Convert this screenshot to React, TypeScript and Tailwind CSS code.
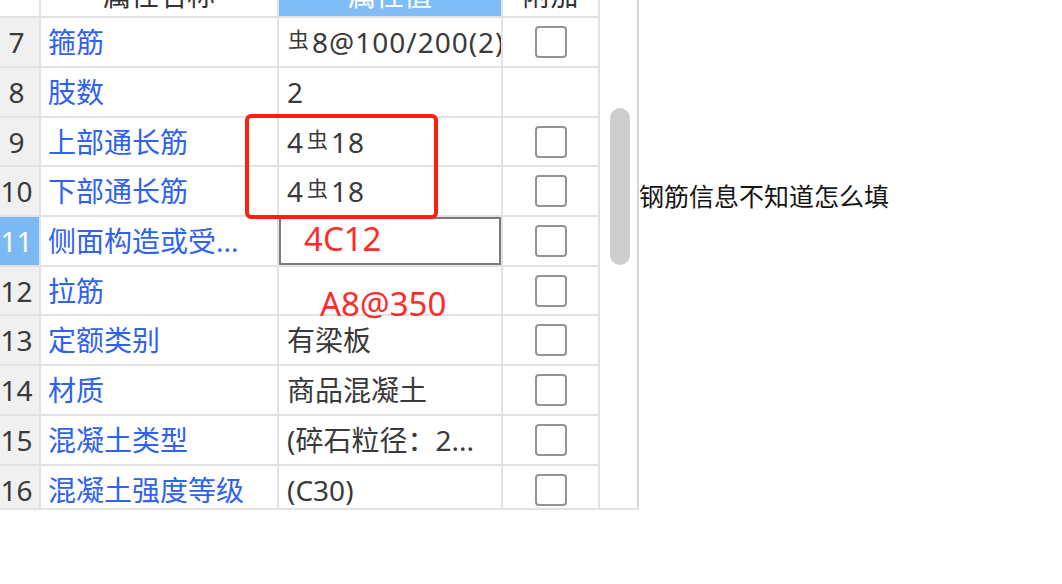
import type { ReactNode } from "react";

// rebar grade symbol, shown small and raised like in the source grid
function Rebar() {
  return <span className="text-[21px] align-[6px] mx-[3px] tracking-normal">虫</span>;
}

type Row = {
  n: number;
  name: string;
  value: ReactNode;
  check: boolean;
  h: string;
  selected?: boolean;
};

const rows: Row[] = [
  { n: 7, name: "箍筋", value: <span className="tracking-[1px] -ml-[2px]"><Rebar />8@100/200(2)</span>, check: true, h: "h-[50px]" },
  { n: 8, name: "肢数", value: "2", check: false, h: "h-[50px]" },
  { n: 9, name: "上部通长筋", value: <span className="tracking-[1px]">4<Rebar />18</span>, check: true, h: "h-[49px]" },
  { n: 10, name: "下部通长筋", value: <span className="tracking-[1px]">4<Rebar />18</span>, check: true, h: "h-[50px]" },
  { n: 11, name: "侧面构造或受...", value: "", check: true, h: "h-[50px]", selected: true },
  { n: 12, name: "拉筋", value: "", check: true, h: "h-[49px]" },
  { n: 13, name: "定额类别", value: "有梁板", check: true, h: "h-[50px]" },
  { n: 14, name: "材质", value: "商品混凝土", check: true, h: "h-[50px]" },
  { n: 15, name: "混凝土类型", value: "(碎石粒径：2...", check: true, h: "h-[50px]" },
  { n: 16, name: "混凝土强度等级", value: "(C30)", check: true, h: "h-[50px]" },
];

const cell = "border-r-2 border-b-2 border-[#e2e2e2] flex items-center overflow-hidden whitespace-nowrap";

export default function App() {
  return (
    <div
      className="w-[1062px] h-[584px] bg-white flex overflow-hidden"
      style={{ fontFamily: '"Noto Sans", "Noto Sans CJK SC", sans-serif' }}
    >
      <div className="relative w-[639px] h-[510px] border-b-2 border-[#e2e2e2] overflow-hidden flex shrink-0">
        <div className="w-[600px] flex flex-col">
          {/* header row, scrolled so only the bottom of the titles shows */}
          <div className="grid grid-cols-[41px_238px_224px_97px] h-[18px] text-[28px] text-[#333]">
            <div className={cell + " bg-white"} />
            <div className={cell + " justify-center items-end"}>
              <span className="leading-[28px] mb-[7px]">属性名称</span>
            </div>
            <div className={cell + " justify-center items-end bg-[#80bdf7] text-white"}>
              <span className="leading-[28px] mb-[7px]">属性值</span>
            </div>
            <div className={cell + " justify-center items-end"}>
              <span className="leading-[28px] mb-[7px]">附加</span>
            </div>
          </div>

          {rows.map((r) => (
            <div key={r.n} className={"grid grid-cols-[41px_238px_224px_97px] shrink-0 text-[28px] " + r.h}>
              <div
                className={
                  cell +
                  " justify-center pr-[6px] " +
                  (r.selected ? "bg-[#7cb9f4] text-white" : "bg-[#f0f0f0] text-[#3a3a3a]")
                }
              >
                {r.n}
              </div>
              <div className={cell + " pl-[7px] text-[#2f62ee]"}>{r.name}</div>
              <div
                className={
                  cell +
                  " pl-[8px] text-[#3a3a3a]" +
                  (r.selected ? " shadow-[inset_0_0_0_2px_#7b7b7b]" : "")
                }
              >
                {r.value}
              </div>
              <div className={cell + " justify-center"}>
                {r.check && (
                  <div className="w-[32px] h-[32px] rounded-[4px] border-2 border-[#939393] bg-white" />
                )}
              </div>
            </div>
          ))}
        </div>

        {/* vertical scrollbar */}
        <div className="w-[39px] border-r-2 border-[#d6d6d6] bg-white">
          <div className="ml-[10px] mt-[108px] w-[20px] h-[157px] rounded-full bg-[#cdcdcd]" />
        </div>

        {/* hand-drawn annotations over the grid */}
        <div className="absolute left-[245px] top-[114px] w-[193px] h-[105px] border-[4px] border-[#ff1f12] rounded-[6px]" />
        <div className="absolute left-[304px] top-[222px] text-[33px] leading-[33px] text-[#ff2b2b]">4C12</div>
        <div className="absolute left-[320px] top-[287px] text-[33px] leading-[33px] text-[#ff2b2b]">A8@350</div>
      </div>

      <div className="flex-1 pt-[178px]">
        <p className="text-[25px] leading-[37px] text-[#151515]">钢筋信息不知道怎么填</p>
      </div>
    </div>
  );
}
